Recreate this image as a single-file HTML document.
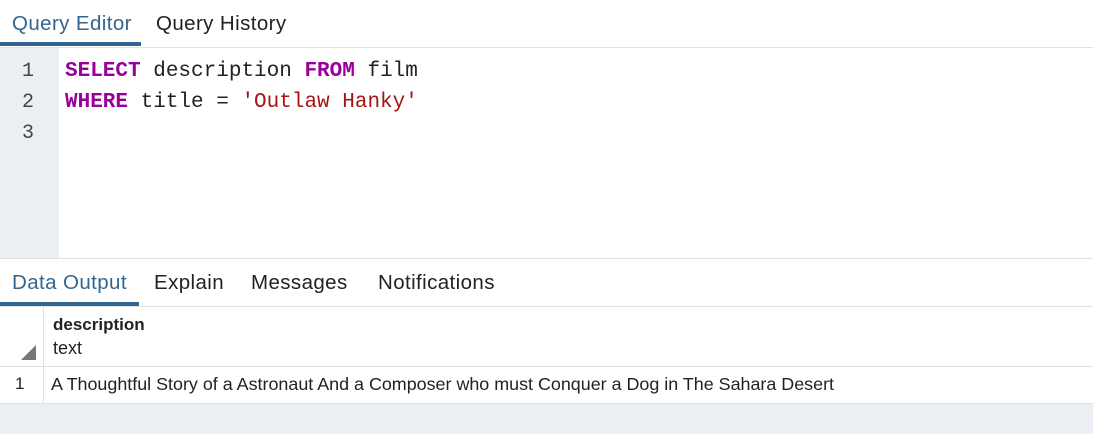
<!DOCTYPE html>
<html><head><style>
body{margin:0;width:1093px;height:434px;background:#fff;font-family:"Liberation Sans",sans-serif;position:relative;overflow:hidden}
.a{position:absolute;white-space:nowrap}
.tab{position:absolute;font-size:20.5px;color:#222;letter-spacing:0.4px;white-space:nowrap}
.mono{font-family:"Liberation Mono",monospace;font-size:21px;position:absolute;white-space:pre}
.k{color:#990099;font-weight:bold}
.s{color:#a31515}
</style></head><body>
<div class="tab" style="left:12px;top:12px;color:#326690">Query Editor</div>
<div class="tab" style="left:156px;top:12px">Query History</div>
<div class="a" style="left:0;top:42px;width:141px;height:4px;background:#326690"></div>
<div class="a" style="left:0;top:47px;width:1093px;height:1px;background:#dde0e6"></div>
<div class="a" style="left:0;top:48px;width:59px;height:210px;background:#ebeef3"></div>
<div class="mono" style="left:22px;top:56px;color:#444;line-height:31px;font-size:20px">1
2
3</div>
<div class="mono" style="left:65px;top:56px;line-height:31px;color:#222"><span class="k">SELECT</span> description <span class="k">FROM</span> film
<span class="k">WHERE</span> title = <span class="s">'Outlaw Hanky'</span></div>
<div class="a" style="left:0;top:258px;width:1093px;height:1px;background:#dde0e6"></div>
<div class="tab" style="left:12px;top:271px;color:#326690">Data Output</div>
<div class="tab" style="left:154px;top:271px">Explain</div>
<div class="tab" style="left:251px;top:271px">Messages</div>
<div class="tab" style="left:378px;top:271px">Notifications</div>
<div class="a" style="left:0;top:302px;width:139px;height:4px;background:#326690"></div>
<div class="a" style="left:0;top:306px;width:1093px;height:1px;background:#dde0e6"></div>
<div class="a" style="left:43px;top:307px;width:1px;height:97px;background:#dde0e6"></div>
<div class="a" style="left:21px;top:345px;width:0;height:0;border-left:15px solid transparent;border-bottom:15px solid #777"></div>
<div class="a" style="left:53px;top:315px;font-size:17px;font-weight:bold;color:#222">description</div>
<div class="a" style="left:53px;top:338px;font-size:18px;color:#222">text</div>
<div class="a" style="left:0;top:366px;width:1093px;height:1px;background:#dde0e6"></div>
<div class="a" style="left:15px;top:374px;font-size:17px;color:#222">1</div>
<div class="a" style="left:51px;top:374px;font-size:17.9px;color:#222">A Thoughtful Story of a Astronaut And a Composer who must Conquer a Dog in The Sahara Desert</div>
<div class="a" style="left:0;top:403px;width:1093px;height:1px;background:#dde0e6"></div>
<div class="a" style="left:0;top:404px;width:1093px;height:30px;background:#ebeef3"></div>
</body></html>
